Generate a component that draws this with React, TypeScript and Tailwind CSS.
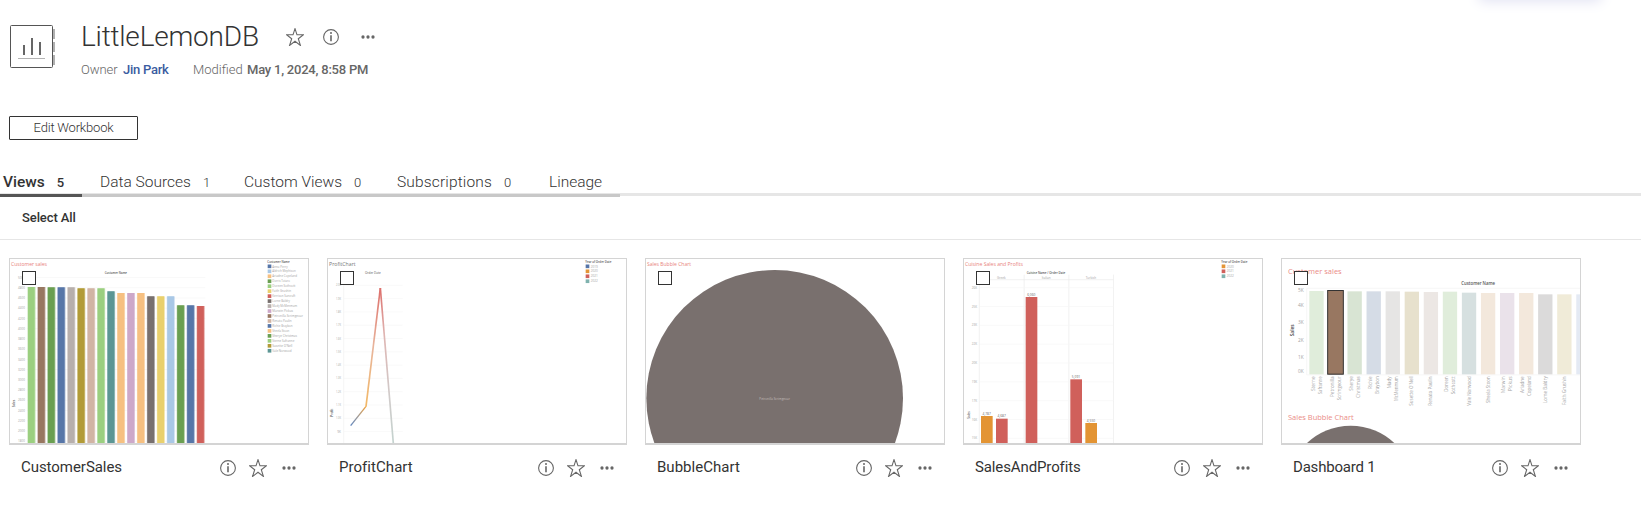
import React from "react";

const CHART_FONT = "'Open Sans', 'Noto Sans', sans-serif";

type TProps = { x: number; y: number; s?: number; w?: number; fill?: string; bold?: boolean; anchor?: "start" | "middle" | "end"; children: React.ReactNode; vertical?: boolean };

function T({ x, y, s = 10, w, fill = "#a3a3a3", bold, anchor = "start", children, vertical }: TProps) {
  return (
    <text
      x={x}
      y={y}
      fontSize={s}
      fill={fill}
      fontFamily={CHART_FONT}
      fontWeight={bold ? 600 : 400}
      textAnchor={anchor}
      textLength={w}
      lengthAdjust="spacingAndGlyphs"
      transform={vertical ? `rotate(-90 ${x} ${y})` : undefined}
    >
      {children}
    </text>
  );
}

function StarIcon({ className = "" }: { className?: string }) {
  return (
    <svg viewBox="0 0 18 18" className={`h-[18px] w-[18px] ${className}`} fill="none" stroke="#666" strokeWidth="1.1">
      <path d="M9 .7 11 6.800H17.500L12.300 10.700 14.400 17.400 9 13.300 3.600 17.400 5.700 10.700.5 6.800H7Z" />
    </svg>
  );
}

function InfoIcon() {
  return (
    <svg viewBox="0 0 16 16" className="h-4 w-4" fill="none" stroke="#666" strokeWidth="1.1">
      <circle cx="8" cy="8" r="7.400" />
      <path d="M8 6.200V12.200" strokeWidth="1.600" />
      <circle cx="8" cy="4.100" r="1" fill="#666" stroke="none" />
    </svg>
  );
}

function MoreIcon() {
  return (
    <svg viewBox="0 0 14 4" className="h-1 w-3.5" fill="#666">
      <circle cx="2" cy="2" r="1.650" />
      <circle cx="7" cy="2" r="1.650" />
      <circle cx="12" cy="2" r="1.650" />
    </svg>
  );
}

function WorkbookIcon() {
  return (
    <svg viewBox="0 0 46 44" className="h-11 w-[46px]" fill="none">
      <path d="M44 4v10M44 17v10M44 30v10" stroke="#b0b0b0" strokeWidth="2" />
      <rect x=".5" y=".5" width="42" height="42" rx="1" fill="#fff" stroke="#555" />
      <path d="M14 20v10M22 13v17M30 17v13" stroke="#666" strokeWidth="2" />
      <path d="M8 33.500h27" stroke="#b4b4b4" />
    </svg>
  );
}

const salesBars: [string, number][] = [
  ["#9bcf80", 111], ["#987761", 111], ["#6a9f51", 112], ["#5776a8", 112], ["#b7afac", 112], ["#b29b37", 115],
  ["#d1b4a4", 115], ["#9bcf80", 115], ["#5c9694", 124], ["#f6c081", 129], ["#cda8c9", 129], ["#f6c081", 129],
  ["#78706e", 139], ["#e9d06d", 139], ["#a9c8e6", 139], ["#6a9f51", 166], ["#5776a8", 166], ["#d0605b", 168],
];

const customers: [string, string, number][] = [
  ["Anna Perry", "#5776a8", 46], ["Aldrich Mephison", "#a9c8e6", 70], ["Ariadne Copeland", "#f6c081", 74], ["Dorris Totaro", "#6a9f51", 53],
  ["Doreen Sothcott", "#9bcf80", 69], ["Faith Grushin", "#e9d06d", 56], ["Kerrison Sancraft", "#d0605b", 69], ["Lorne Baldry", "#78706e", 53],
  ["Mady McMenmum", "#b7afac", 74], ["Marwin Pickus", "#cda8c9", 62], ["Petronilla Scrimgeour", "#987761", 92], ["Renato Paulin", "#d1b4a4", 58],
  ["Richie Braybon", "#5776a8", 61], ["Sheela Stoon", "#f6c081", 51], ["Sherye Christmas", "#6a9f51", 74], ["Sterne Safranne", "#9bcf80", 66],
  ["Susette O'Nell", "#b29b37", 60], ["Vale Norwood", "#5c9694", 58],
];

function CustomerSalesChart() {
  return (
    <svg viewBox="30 27 894 552" className="block h-full w-full">
      <T x={33} y={47} s={15} w={108} fill="#e8827c">Customer sales</T>
      <T x={314} y={71} w={67} fill="#555" bold>Customer Name</T>
      {Array.from({ length: 17 }, (_, i) => (
        <g key={i}>
          <path d={`M80 ${82.500 + i * 30.700}H616`} stroke="#f6f6f6" strokeWidth="2" />
          <T x={54} y={86 + i * 30.700} w={21}>{5000 - i * 200}</T>
        </g>
      ))}
      <T x={46} y={472} w={23} fill="#555" bold vertical>Sales</T>
      {salesBars.map(([color, top], i) => (
        <g key={i} fill={color}>
          <rect x={82.500 + i * 29.850} y={top} width="24" height={580 - top} opacity=".6" />
          <rect x={84 + i * 29.850} y={top} width="20" height={580 - top} />
        </g>
      ))}
      <T x={802} y={39} w={67} fill="#555" bold>Customer Name</T>
      {customers.map(([name, color, width], i) => (
        <g key={name}>
          <rect x="803" y={43.500 + i * 14.900} width="11" height="11" fill={color} />
          <T x={817} y={52.500 + i * 14.900} w={width}>{name}</T>
        </g>
      ))}
    </svg>
  );
}

function YearLegend({ x, years }: { x: number; years: [string, string][] }) {
  return (
    <g>
      <T x={x} y={39} w={78} fill="#555" bold>Year of Order Date</T>
      {years.map(([year, color], i) => (
        <g key={year}>
          <rect x={x + 1} y={43.500 + i * 14.900} width="11" height="11" fill={color} />
          <T x={x + 16} y={52.500 + i * 14.900} w={21}>{year}</T>
        </g>
      ))}
    </g>
  );
}

function ProfitLineChart() {
  const ticks = ["2.0K", "1.9K", "1.8K", "1.7K", "1.6K", "1.5K", "1.4K", "1.3K", "1.2K", "1.1K", "1.0K", "9K"];
  return (
    <svg viewBox="24 27 894 552" className="block h-full w-full">
      <defs>
        <linearGradient id="rise" x1="0" x2="1" y1="0" y2="0"><stop offset="0" stopColor="#6288c0" /><stop offset=".5" stopColor="#a39a92" /><stop offset="1" stopColor="#f1a23c" /></linearGradient>
        <linearGradient id="peak" x1="0" x2="0" y1="1" y2="0"><stop offset="0" stopColor="#f2b866" /><stop offset=".5" stopColor="#e8b59c" /><stop offset="1" stopColor="#dd6f6b" /></linearGradient>
        <linearGradient id="fall" x1="0" x2="0" y1="0" y2="1"><stop offset="0" stopColor="#dd6f6b" /><stop offset=".3" stopColor="#dfb5b2" /><stop offset=".7" stopColor="#d0cbca" /><stop offset="1" stopColor="#c4d3cf" /></linearGradient>
      </defs>
      <T x={27} y={47} s={15} w={80} fill="#777">ProfitChart</T>
      <T x={135} y={71} w={47} fill="#555">Order Date</T>
      <path d="M71 104V580" stroke="#f0f0f0" strokeWidth="2" />
      {ticks.map((tick, i) => (
        <g key={tick}>
          <path d={`M71 ${106 + i * 39.900}H248`} stroke="#f6f6f6" strokeWidth="2" />
          <T x={i === 11 ? 52 : 48} y={109 + i * 39.900} w={i === 11 ? 11 : 15}>{tick}</T>
        </g>
      ))}
      <T x={40} y={500} w={24} fill="#555" bold vertical>Profit</T>
      <g fill="none" strokeWidth="4">
        <path d="M92 527 138 469" stroke="url(#rise)" />
        <path d="M138 470 181 114" stroke="url(#peak)" strokeWidth="5" />
        <path d="M181 114 220 580" stroke="url(#fall)" strokeWidth="5" />
      </g>
      <YearLegend x={796} years={[["2019", "#5776a8"], ["2020", "#e49536"], ["2021", "#d0605b"], ["2022", "#7fb2ae"]]} />
    </svg>
  );
}

function SalesBubbleChart() {
  return (
    <svg viewBox="18 27 894 552" className="block h-full w-full">
      <T x={21} y={47} s={14} w={132} fill="#e8827c">Sales Bubble Chart</T>
      <circle cx="404" cy="445" r="385" fill="#79706e" />
      <T x={358} y={449} w={92} fill="#c4bebc">Petronilla Scrimgeour</T>
    </svg>
  );
}

function CuisineChart() {
  const bars: [number, number, string, string][] = [
    [78, 498, "#e39434", "4,787"], [123, 506, "#d0605b", "4,687"], [212, 141, "#d0605b", "6,060"], [346, 388, "#d0605b", "5,091"], [391, 519, "#e39434", "4,550"],
  ];
  return (
    <svg viewBox="27 27 894 552" className="block h-full w-full">
      <T x={30} y={47} s={15} w={174} fill="#e8827c">Cuisine Sales and Profits</T>
      <T x={215} y={71} w={116} fill="#555" bold>Cuisine Name / Order Date</T>
      <T x={126} y={86} w={26}>Greek</T>
      <T x={260} y={86} w={27}>Italian</T>
      <T x={392} y={86} w={31}>Turkish</T>
      <path d="M73 89H476M73 90V580M207.500 74V580M341.500 74V580M475.500 74V580" stroke="#ebebeb" strokeWidth="2" />
      {Array.from({ length: 9 }, (_, i) => (
        <g key={i}>
          <path d={`M74 ${113 + i * 56.500}H475`} stroke="#f6f6f6" strokeWidth="2" />
          <T x={50} y={116 + i * 56.500} w={16}>{["26K", "25K", "23K", "22K", "20K", "19K", "17K", "16K", "15K"][i]}</T>
        </g>
      ))}
      <T x={44} y={506} w={22} fill="#555" bold vertical>Sales</T>
      {bars.map(([x, y, color, value]) => (
        <g key={x}>
          <rect x={x} y={y} width="35" height={580 - y} fill={color} />
          <T x={x + 17} y={y - 4.500} w={25} fill="#666" anchor="middle">{value}</T>
        </g>
      ))}
      <YearLegend x={799} years={[["2020", "#e49536"], ["2021", "#d0605b"], ["2022", "#7fb2ae"]]} />
    </svg>
  );
}

const dashboardBars: [string, number, string[]][] = [
  ["#e0eddb", 123, ["Sterne", "Safranne"]], ["#987761", 122, ["Petronilla", "Scrimgeour"]], ["#d8e4d3", 124, ["Sherye", "Christmas"]],
  ["#d5dce6", 124, ["Richie", "Braybon"]], ["#e6e5e4", 124, ["Mady", "McMenmum"]], ["#e7e1cd", 125, ["Susette O'Nell"]],
  ["#ece7e4", 126, ["Renato Paulin"]], ["#e0eddb", 125, ["Doreen", "Sothcott"]], ["#d6e0e0", 128, ["Vale Norwood"]],
  ["#f3e8dc", 129, ["Sheela Stoon"]], ["#eae2ea", 129, ["Marwin", "Pickus"]], ["#f3e8dc", 129, ["Ariadne", "Copeland"]],
  ["#dbdada", 133, ["Lorne Baldry"]], ["#f0ebd8", 133, ["Faith Grushin"]], ["#e4eaf4", 133, ["Aldrich"]],
];

const labelLengths: Record<string, number> = {
  Sterne: 44, Safranne: 54, Petronilla: 62, Scrimgeour: 72, Sherye: 43, Christmas: 65, Richie: 38, Braybon: 53, Mady: 36, McMenmum: 74,
  "Susette O'Nell": 88, "Renato Paulin": 88, Doreen: 46, Sothcott: 54, "Vale Norwood": 88, "Sheela Stoon": 80, Marwin: 50, Pickus: 45,
  Ariadne: 50, Copeland: 59, "Lorne Baldry": 80, "Faith Grushin": 86, Aldrich: 44,
};

function DashboardChart() {
  return (
    <svg viewBox="21 27 894 552" className="block h-full w-full">
      <T x={39} y={72} s={23} w={161} fill="#ea8d87">Customer sales</T>
      <T x={559} y={105} s={14} w={101} fill="#555" bold>Customer Name</T>
      {["5K", "4K", "3K", "2K", "1K", "0K"].map((tick, i) => (
        <T key={tick} x={69} y={[127, 172, 223, 275, 327, 369][i]} s={14} w={17}>{tick}</T>
      ))}
      <path d="M95 115H915M95 115V375M95 374.500H915" stroke="#f3f3f3" strokeWidth="2" />
      <T x={58} y={259} s={14} w={36} fill="#444" bold vertical>Sales</T>
      {dashboardBars.map(([color, top, lines], i) => {
        const x = 103 + i * 57.200;
        return (
          <g key={i}>
            <rect x={x} y={top} width="43" height={373 - top} fill={color} />
            {i === 1 && <rect x="158" y="121.500" width="47" height="251" fill={color} stroke="#333" strokeWidth="3" />}
            {lines.map((line, j) => (
              <T key={line} x={x + (lines.length === 1 ? 26 : 16 + j * 21)} y={379} s={15} w={labelLengths[line]} anchor="end" vertical>{line}</T>
            ))}
          </g>
        );
      })}
      <T x={39} y={509} s={23} w={197} fill="#ea8d87">Sales Bubble Chart</T>
      <circle cx="227" cy="718" r="191" fill="#79706e" />
    </svg>
  );
}

const views = [
  { name: "CustomerSales", chart: CustomerSalesChart, tracking: "tracking-[-0.05px]" },
  { name: "ProfitChart", chart: ProfitLineChart, tracking: "tracking-[0.05px]" },
  { name: "BubbleChart", chart: SalesBubbleChart, tracking: "tracking-[0.02px]" },
  { name: "SalesAndProfits", chart: CuisineChart, tracking: "tracking-[-0.12px]" },
  { name: "Dashboard 1", chart: DashboardChart, tracking: "tracking-[-0.2px]" },
];

const tabs = [
  { label: "Data Sources", count: "1", box: "w-[144px]" },
  { label: "Custom Views", count: "0", box: "w-[153px]" },
  { label: "Subscriptions", count: "0", box: "w-[152px] tracking-[0.15px]" },
  { label: "Lineage", count: "", box: "w-[72px]" },
];

export default function App() {
  return (
    <div className="relative h-[508px] w-full overflow-hidden bg-white font-['Roboto',sans-serif] text-[#333]">
      <div className="absolute -top-5 left-[1480px] h-5 w-[120px] shadow-[0_0_14px_1px_#dfe0f2]" />
      <header className="flex h-[116px] pt-[25px] pl-2.5">
        <WorkbookIcon />
        <div className="ml-[25px]">
          <div className="flex h-6 items-center">
            <h1 className="w-[179px] text-[28px] leading-6 font-light tracking-[-0.2px] whitespace-nowrap">LittleLemonDB</h1>
            <div className="ml-[26px] flex items-center gap-[19px]">
              <StarIcon />
              <InfoIcon />
              <span className="ml-[3px] flex"><MoreIcon /></span>
            </div>
          </div>
          <div className="mt-[11px] flex h-5 items-center text-[13px] whitespace-nowrap text-[#666]">
            <span className="w-[42px] font-light tracking-[-0.05px]">Owner</span>
            <span className="w-[70px] font-medium tracking-[-0.25px] text-[#3a5ca0]">Jin Park</span>
            <span className="w-[54px] font-light">Modified</span>
            <span className="font-medium tracking-[-0.22px]">May 1, 2024, 8:58 PM</span>
          </div>
        </div>
      </header>
      <button className="ml-[9px] flex h-6 w-[129px] items-center justify-center rounded-[1px] border border-[#333] text-[13px] font-light tracking-[-0.2px]">Edit Workbook</button>
      <nav className="mt-[29px] mb-px flex h-[27px] border-b-[3px] border-[#e6e6e6] text-[15.500px] font-light whitespace-nowrap">
        <div className="flex h-[28px] w-[82px] shrink-0 items-center border-b-[3px] border-[#555] pt-[2px] pl-[3px] font-medium">Views<span className="ml-3 text-[13px]">5</span></div>
        <div className="flex h-[28px] w-[538px] shrink-0 items-center border-b-[3px] border-[#c8c8c8] pt-[2px] pl-[18px]">
          {tabs.map((tab) => (
            <div key={tab.label} className={`${tab.box} flex shrink-0 items-center`}>{tab.label}<span className="ml-3 text-[13px]">{tab.count}</span></div>
          ))}
        </div>
      </nav>
      <div className="flex h-[43px] items-center border-b border-[#e6e6e6] pl-[22px] text-[13px] font-medium tracking-[-0.1px]">Select All</div>
      <main className="flex gap-[18px] pt-[18px] pl-[9px]">
        {views.map(({ name, chart: Chart, tracking }) => (
          <article key={name} className="w-[300px] shrink-0">
            <div className="relative h-[187px] border border-b-2 border-[#d4d4d4] bg-white">
              <Chart />
              <span className="absolute top-3 left-3 h-3.5 w-3.5 border border-[#333] bg-white" />
            </div>
            <div className="flex h-[46px] items-center pr-[13px] pl-3">
              <h2 className={`flex-1 pb-0.5 text-[15px] ${tracking}`}>{name}</h2>
              <div className="flex items-center">
                <InfoIcon />
                <StarIcon className="ml-[13px]" />
                <span className="ml-[15px] flex"><MoreIcon /></span>
              </div>
            </div>
          </article>
        ))}
      </main>
    </div>
  );
}
